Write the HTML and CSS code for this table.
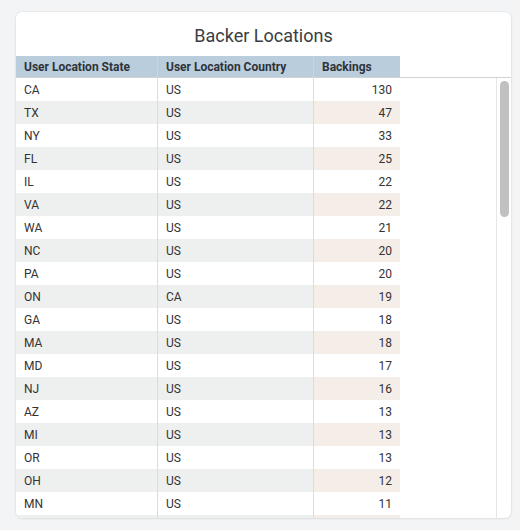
FILE: index.html
```html
<!DOCTYPE html>
<html>
<head>
<meta charset="utf-8">
<link rel="stylesheet" href="styles.css">
</head>
<body>
<div class="card">
  <h1 class="title">Backer Locations</h1>
  <div class="head">
    <div class="hcell c1">User Location State</div>
    <div class="hcell c2">User Location Country</div>
    <div class="hcell c3">Backings</div>
  </div>
  <div class="body">
    <div class="rows">
      <div class="row"><div class="cell c1">CA</div><div class="cell c2">US</div><div class="cell c3">130</div></div>
      <div class="row alt"><div class="cell c1">TX</div><div class="cell c2">US</div><div class="cell c3">47</div></div>
      <div class="row"><div class="cell c1">NY</div><div class="cell c2">US</div><div class="cell c3">33</div></div>
      <div class="row alt"><div class="cell c1">FL</div><div class="cell c2">US</div><div class="cell c3">25</div></div>
      <div class="row"><div class="cell c1">IL</div><div class="cell c2">US</div><div class="cell c3">22</div></div>
      <div class="row alt"><div class="cell c1">VA</div><div class="cell c2">US</div><div class="cell c3">22</div></div>
      <div class="row"><div class="cell c1">WA</div><div class="cell c2">US</div><div class="cell c3">21</div></div>
      <div class="row alt"><div class="cell c1">NC</div><div class="cell c2">US</div><div class="cell c3">20</div></div>
      <div class="row"><div class="cell c1">PA</div><div class="cell c2">US</div><div class="cell c3">20</div></div>
      <div class="row alt"><div class="cell c1">ON</div><div class="cell c2">CA</div><div class="cell c3">19</div></div>
      <div class="row"><div class="cell c1">GA</div><div class="cell c2">US</div><div class="cell c3">18</div></div>
      <div class="row alt"><div class="cell c1">MA</div><div class="cell c2">US</div><div class="cell c3">18</div></div>
      <div class="row"><div class="cell c1">MD</div><div class="cell c2">US</div><div class="cell c3">17</div></div>
      <div class="row alt"><div class="cell c1">NJ</div><div class="cell c2">US</div><div class="cell c3">16</div></div>
      <div class="row"><div class="cell c1">AZ</div><div class="cell c2">US</div><div class="cell c3">13</div></div>
      <div class="row alt"><div class="cell c1">MI</div><div class="cell c2">US</div><div class="cell c3">13</div></div>
      <div class="row"><div class="cell c1">OR</div><div class="cell c2">US</div><div class="cell c3">13</div></div>
      <div class="row alt"><div class="cell c1">OH</div><div class="cell c2">US</div><div class="cell c3">12</div></div>
      <div class="row"><div class="cell c1">MN</div><div class="cell c2">US</div><div class="cell c3">11</div></div>
      <div class="row alt"><div class="cell c1"></div><div class="cell c2"></div><div class="cell c3"></div></div>
    </div>
    <div class="scroll"><div class="thumb"></div></div>
  </div>
</div>
</body>
</html>
```

FILE: styles.css
```css
html, body {
  margin: 0;
  padding: 0;
  background: #f3f4f5;
}
body {
  padding: 12px 9px 12px 16px;
  font-family: Roboto, "Liberation Sans", sans-serif;
  color: #333;
}
.card {
  width: 495px;
  height: 506px;
  background: #fff;
  border-radius: 6px;
  box-shadow: 0 0 2px rgba(0,0,0,0.12), 0 1px 3px rgba(0,0,0,0.06);
  display: flex;
  flex-direction: column;
  overflow: hidden;
}
.title {
  margin: 0;
  height: 44px;
  display: flex;
  align-items: center;
  justify-content: center;
  font-size: 18px;
  font-weight: 400;
  color: #3a3d42;
  padding-top: 2px;
  box-sizing: border-box;
}
.head {
  display: flex;
  height: 22px;
  border-bottom: 1px solid #cfd3d6;
  box-sizing: border-box;
}
.hcell {
  background: #bacddd;
  font-size: 12px;
  font-weight: 700;
  color: #2e3338;
  display: flex;
  align-items: center;
  padding: 0 8px;
  box-sizing: border-box;
}
.hcell + .hcell {
  border-left: 1px dotted #d4dde6;
}
.c1 { width: 141px; }
.c2 { width: 156px; }
.c3 { width: 87px; }
.body {
  flex: 1;
  display: flex;
  min-height: 0;
}
.rows {
  flex: 1;
  overflow: hidden;
}
.row {
  display: flex;
  height: 23px;
}
.cell {
  font-size: 12px;
  color: #333;
  display: flex;
  align-items: center;
  padding: 0 8px;
  box-sizing: border-box;
}
.cell.c2, .cell.c3 {
  border-left: 1px solid #dcdcdc;
}
.cell.c3 {
  justify-content: flex-end;
}
.row.alt .c1, .row.alt .c2 {
  background: #eeefef;
}
.row.alt .c3 {
  background: #f5ede7;
}
.scroll {
  width: 15px;
  border-left: 1px solid #e6e6e6;
  box-sizing: border-box;
  padding: 3px 2px 0 3px;
}
.thumb {
  height: 136px;
  background: #c1c1c1;
  border-radius: 5px;
}
```
